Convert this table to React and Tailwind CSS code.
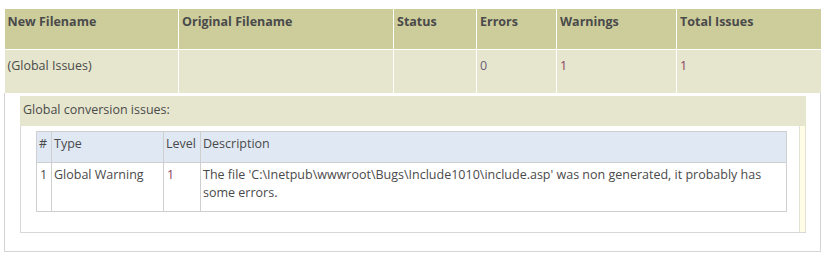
const columns = [
  { label: 'New Filename', width: 'w-[174px]' },
  { label: 'Original Filename', width: 'w-[215px]' },
  { label: 'Status', width: 'w-[83px]' },
  { label: 'Errors', width: 'w-[80px]' },
  { label: 'Warnings', width: 'w-[120px]' },
  { label: 'Total Issues', width: 'w-[144px]' },
]

const issues = [
  {
    id: 1,
    type: 'Global Warning',
    level: 1,
    description:
      "The file 'C:\\Inetpub\\wwwroot\\Bugs\\Include1010\\include.asp' was non generated, it probably has some errors.",
  },
]

function IssuesTable() {
  return (
    <table className="w-[751px] table-fixed border-collapse border border-[#cfcfcf]">
      <colgroup>
        <col className="w-[15px]" />
        <col className="w-[112px]" />
        <col className="w-[37px]" />
        <col />
      </colgroup>
      <thead>
        <tr className="h-[31px] bg-[#dfe8f3] text-left">
          <th className="border-r border-[#cfcfcf] px-[2px] pt-[3px] align-top font-normal">#</th>
          <th className="border-r border-[#cfcfcf] px-[2px] pt-[3px] align-top font-normal">Type</th>
          <th className="border-r border-[#cfcfcf] px-[2px] pt-[3px] align-top font-normal">Level</th>
          <th className="px-[2px] pt-[3px] align-top font-normal">Description</th>
        </tr>
      </thead>
      <tbody>
        {issues.map((row) => (
          <tr key={row.id} className="h-[49px] border-t border-[#cfcfcf] bg-white">
            <td className="border-r border-[#cfcfcf] px-[3px] pt-[3px] align-top">{row.id}</td>
            <td className="border-r border-[#cfcfcf] px-[2px] pt-[3px] align-top">{row.type}</td>
            <td className="border-r border-[#cfcfcf] px-[3px] pt-[3px] align-top text-[#8a3b5c]">{row.level}</td>
            <td className="px-[2px] pt-[3px] pr-[20px] align-top">{row.description}</td>
          </tr>
        ))}
      </tbody>
    </table>
  )
}

export default function App() {
  return (
    <div
      className="bg-white pt-[9px] pl-[4px] text-[12.5px] leading-[18px] text-[#4a4a4a]"
      style={{ fontFamily: '"Open Sans", "Noto Sans", sans-serif' }}
    >
      <table className="w-[816px] table-fixed border-collapse">
        <colgroup>
          {columns.map((c) => (
            <col key={c.label} className={c.width} />
          ))}
        </colgroup>
        <thead>
          <tr className="h-[40px] bg-[#cdcd9c] text-left">
            {columns.map((c, i) => (
              <th
                key={c.label}
                className={`px-[3px] pt-[4px] align-top font-bold text-[#4a4a4a] ${i < columns.length - 1 ? 'border-r border-white' : ''}`}
              >
                {c.label}
              </th>
            ))}
          </tr>
        </thead>
        <tbody>
          <tr className="h-[44px] border-t border-white bg-[#e6e6cf]">
            <td className="border-r border-white px-[3px] pt-[7px] align-top">(Global Issues)</td>
            <td className="border-r border-white" />
            <td className="border-r border-white" />
            <td className="border-r border-white px-[3px] pt-[7px] align-top text-[#6d5f78]">0</td>
            <td className="border-r border-white px-[3px] pt-[7px] align-top text-[#8a3b5c]">1</td>
            <td className="px-[3px] pt-[7px] align-top text-[#8a3b5c]">1</td>
          </tr>
          <tr>
            <td colSpan={6} className="border-x border-b border-[#d4d4d4] bg-white pl-[15px] pr-[14px] pt-[3px] pb-[18px]">
              <div className="h-[30px] bg-[#e6e6cf] px-[3px] pt-[5px]">Global conversion issues:</div>
              <div className="flex border-b border-l border-[#d8d8d8]">
                <div className="flex-1 pl-[15px] pt-[5px] pb-[20px]">
                  <IssuesTable />
                </div>
                <div className="w-[7px] border-x border-[#e2e2d4] bg-[#fffde6]" />
              </div>
            </td>
          </tr>
        </tbody>
      </table>
    </div>
  )
}
